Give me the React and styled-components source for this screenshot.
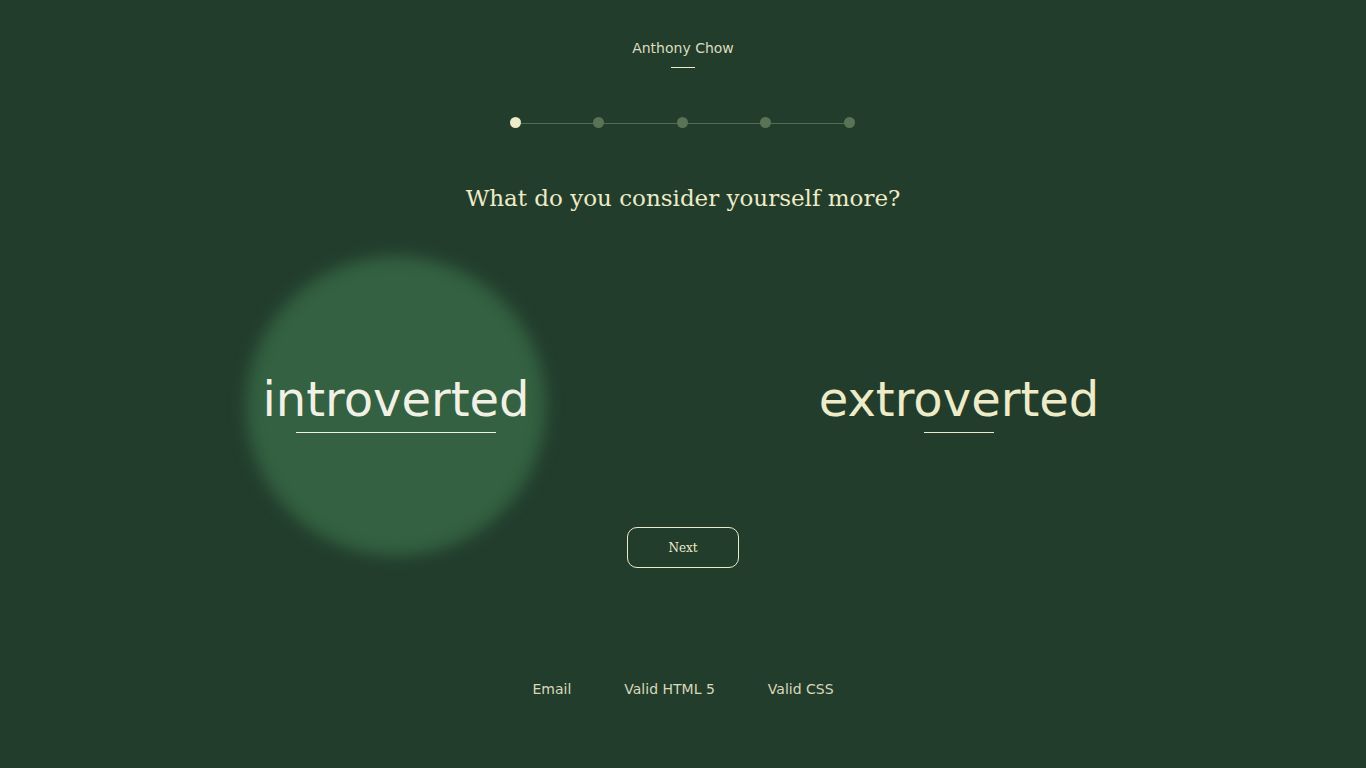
import React from "react";
import styled, { createGlobalStyle } from "styled-components";

const Global = createGlobalStyle`
  html, body { margin: 0; padding: 0; background: #223d2c; }
  body { font-family: "DejaVu Sans", sans-serif; color: #eeebc8; }
`;

const Page = styled.div`
  width: 1366px;
  height: 768px;
  display: flex;
  flex-direction: column;
  align-items: center;
  background: #223d2c;
  overflow: hidden;
`;

const Header = styled.header`
  margin-top: 40px;
  display: flex;
  flex-direction: column;
  align-items: center;
`;

const Name = styled.div`
  font-family: "DejaVu Sans", sans-serif;
  font-size: 14px;
  color: #dcdcbf;
`;

const Underline = styled.div`
  width: ${(p) => p.$w}px;
  height: 1px;
  background: ${(p) => p.$c || "#eeebc8"};
  margin-top: ${(p) => p.$mt}px;
`;

const Steps = styled.div`
  margin-top: 49px;
  margin-right: 2px;
  width: 345px;
  display: flex;
  align-items: center;
  justify-content: space-between;
  position: relative;
`;

const StepLine = styled.div`
  position: absolute;
  left: 5px;
  right: 5px;
  top: 50%;
  height: 1px;
  background: #4f6e54;
`;

const Dot = styled.div`
  width: 11px;
  height: 11px;
  border-radius: 50%;
  background: ${(p) => (p.$active ? "#eeebc8" : "#587356")};
  position: relative;
`;

const Question = styled.h1`
  margin: 57px 0 0;
  font-family: "DejaVu Serif", serif;
  font-weight: 400;
  font-size: 23px;
  color: #eeebc8;
`;

const Options = styled.div`
  margin-top: 164px;
  display: flex;
  gap: 263px;
  margin-right: 11px;
`;

const Option = styled.div`
  width: 300px;
  position: relative;
  display: flex;
  flex-direction: column;
  align-items: center;
  cursor: pointer;
`;

const Glow = styled.div`
  position: absolute;
  left: 50%;
  top: calc(50% + 2px);
  width: 300px;
  height: 300px;
  transform: translate(-50%, -50%);
  border-radius: 50%;
  background: #336141;
  filter: blur(8px);
`;

const OptionLabel = styled.div`
  position: relative;
  font-family: "DejaVu Sans", sans-serif;
  font-size: 48px;
  line-height: 1;
  color: ${(p) => (p.$hover ? "#f1f0e4" : "#eeebc8")};
  white-space: nowrap;
`;

const OptionLine = styled(Underline)`
  position: relative;
`;

const NextButton = styled.button`
  margin-top: 94px;
  width: 112px;
  height: 41px;
  border: 1px solid #eeebc8;
  border-radius: 10px;
  background: transparent;
  color: #eeebc8;
  font-family: "DejaVu Serif", serif;
  font-size: 12px;
  cursor: pointer;
`;

const Footer = styled.footer`
  margin-top: 113px;
  display: flex;
  gap: 53px;
`;

const FootLink = styled.a`
  font-family: "DejaVu Sans", sans-serif;
  font-size: 14px;
  color: #d8d8bb;
  text-decoration: none;
`;

export default function App() {
  return (
    <Page>
      <Global />
      <Header>
        <Name>Anthony Chow</Name>
        <Underline $w={24} $mt={11} />
      </Header>
      <Steps>
        <StepLine />
        {[0, 1, 2, 3, 4].map((i) => (
          <Dot key={i} $active={i === 0} />
        ))}
      </Steps>
      <Question>What do you consider yourself more?</Question>
      <Options>
        <Option>
          <Glow />
          <OptionLabel $hover>introverted</OptionLabel>
          <OptionLine $w={200} $mt={9} $c="#f1f0e4" />
        </Option>
        <Option>
          <OptionLabel>extroverted</OptionLabel>
          <OptionLine $w={70} $mt={9} />
        </Option>
      </Options>
      <NextButton>Next</NextButton>
      <Footer>
        <FootLink href="#">Email</FootLink>
        <FootLink href="#">Valid HTML 5</FootLink>
        <FootLink href="#">Valid CSS</FootLink>
      </Footer>
    </Page>
  );
}
